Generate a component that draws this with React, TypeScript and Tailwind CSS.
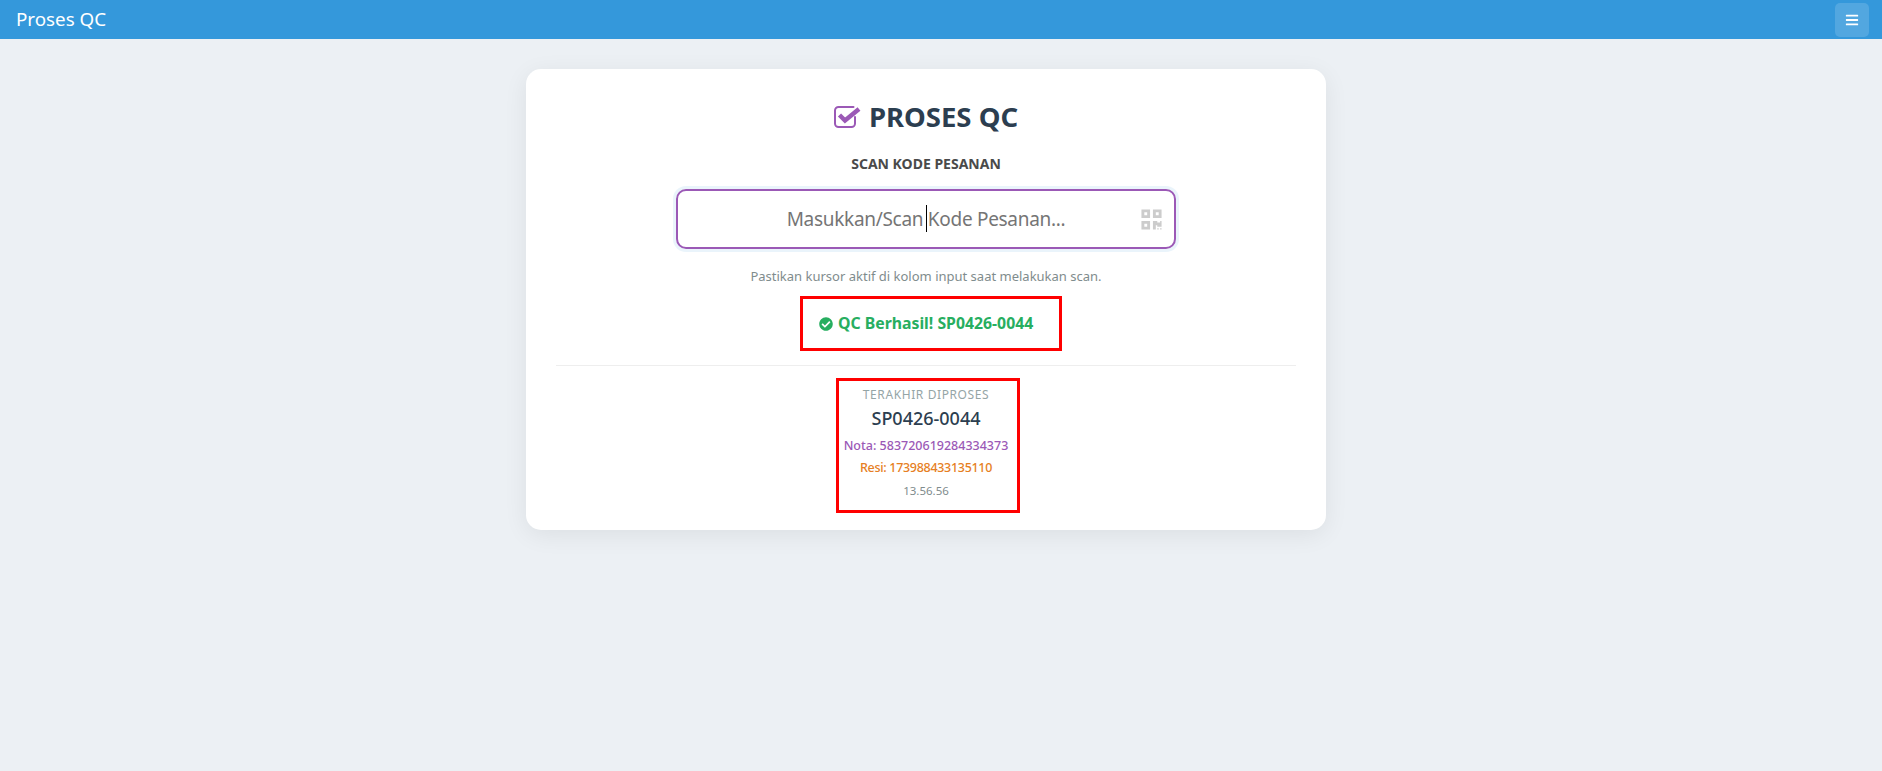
import React from "react";
import { FaBars, FaCheckCircle, FaQrcode } from "react-icons/fa";

const font = { fontFamily: '"Noto Sans", "Open Sans", sans-serif' };

const App: React.FC = () => {
  return (
    <div className="min-h-[771px] bg-[#ecf0f4]" style={font}>
      <header className="h-[39px] bg-[#3498db] flex items-center justify-between pl-4 pr-[13px]">
        <span className="text-white text-[18.8px] leading-none">Proses QC</span>
        <button className="w-[34px] h-[34px] rounded-[5px] bg-white/15 flex items-center justify-center text-white">
          <FaBars className="w-[14px] h-[14px]" />
        </button>
      </header>

      <main className="flex justify-center pt-[30px] pr-[30px]">
        <div className="w-[800px] h-[461px] bg-white rounded-[15px] shadow-[0_5px_25px_rgba(0,0,0,0.07)] px-[30px] pt-[27px] flex flex-col items-center">
          <h1 className="flex items-center gap-[8px] h-[42px] text-[#2c3e50] text-[27.5px] font-bold">
            <svg viewBox="0 0 27 22" className="w-[27px] h-[22px]" fill="none">
              <path
                d="M19.5 1H4.5C2.6 1 1 2.6 1 4.5v13C1 19.4 2.6 21 4.5 21h13c1.9 0 3.5-1.6 3.5-3.5V11"
                stroke="#9b59b6"
                strokeWidth="2"
                strokeLinecap="round"
              />
              <path d="M5.5 9l5.5 5.5L25 3" stroke="#9b59b6" strokeWidth="4.5" />
            </svg>
            PROSES QC
          </h1>

          <div className="mt-[16px] text-[#4a4a4a] text-[14px] font-bold leading-[20px]">SCAN KODE PESANAN</div>

          <div className="relative mt-[15px] w-[500px] h-[60px] rounded-[10px] shadow-[0_0_0_3px_rgba(52,152,219,0.1)]">
            <input
              readOnly
              placeholder="Masukkan/Scan Kode Pesanan..."
              className="w-full h-full rounded-[10px] border-2 border-[#9b59b6] bg-white text-center text-[19px] tracking-[-0.3px] outline-none placeholder:text-[#757575]"
            />
            <span className="absolute left-[250px] top-[16px] w-px h-[27px] bg-black" />
            <FaQrcode className="absolute right-[13.5px] top-[18.5px] w-[23px] h-[23px] text-[#ccc]" />
          </div>

          <p className="mt-[17px] text-[#7f8c8d] text-[13px] leading-[20px]">
            Pastikan kursor aktif di kolom input saat melakukan scan.
          </p>

          <div className="mt-[10px] ml-[10px] w-[262px] h-[55px] border-[3px] border-[#ff0000] flex items-center justify-start pl-[16px] gap-[5px] text-[#27ae60] text-[15.8px] font-bold whitespace-nowrap">
            <FaCheckCircle className="w-[14px] h-[14px]" />
            QC Berhasil! SP0426-0044
          </div>

          <div className="mt-[14px] w-full border-t border-[#eeeeee] flex justify-center pt-[12px]">
            <div className="ml-[4px] w-[184px] h-[135px] border-[3px] border-[#ff0000] flex flex-col items-center pt-[5px] pr-[4px] whitespace-nowrap">
              <div className="text-[#95a5a6] text-[12px] tracking-[0.6px] leading-[18px]">TERAKHIR DIPROSES</div>
              <div className="mt-[1px] text-[#2c3e50] text-[18px] font-medium leading-[26px]">SP0426-0044</div>
              <div className="mt-[5px] text-[#9b59b6] text-[12.5px] font-medium leading-[20px]">Nota: 583720619284334373</div>
              <div className="mt-[2px] text-[#e67e22] text-[12.5px] font-medium tracking-[-0.3px] leading-[20px]">Resi: 173988433135110</div>
              <div className="mt-[4px] text-[#7f8c8d] text-[11.5px] leading-[18px]">13.56.56</div>
            </div>
          </div>
        </div>
      </main>
    </div>
  );
};

export default App;
